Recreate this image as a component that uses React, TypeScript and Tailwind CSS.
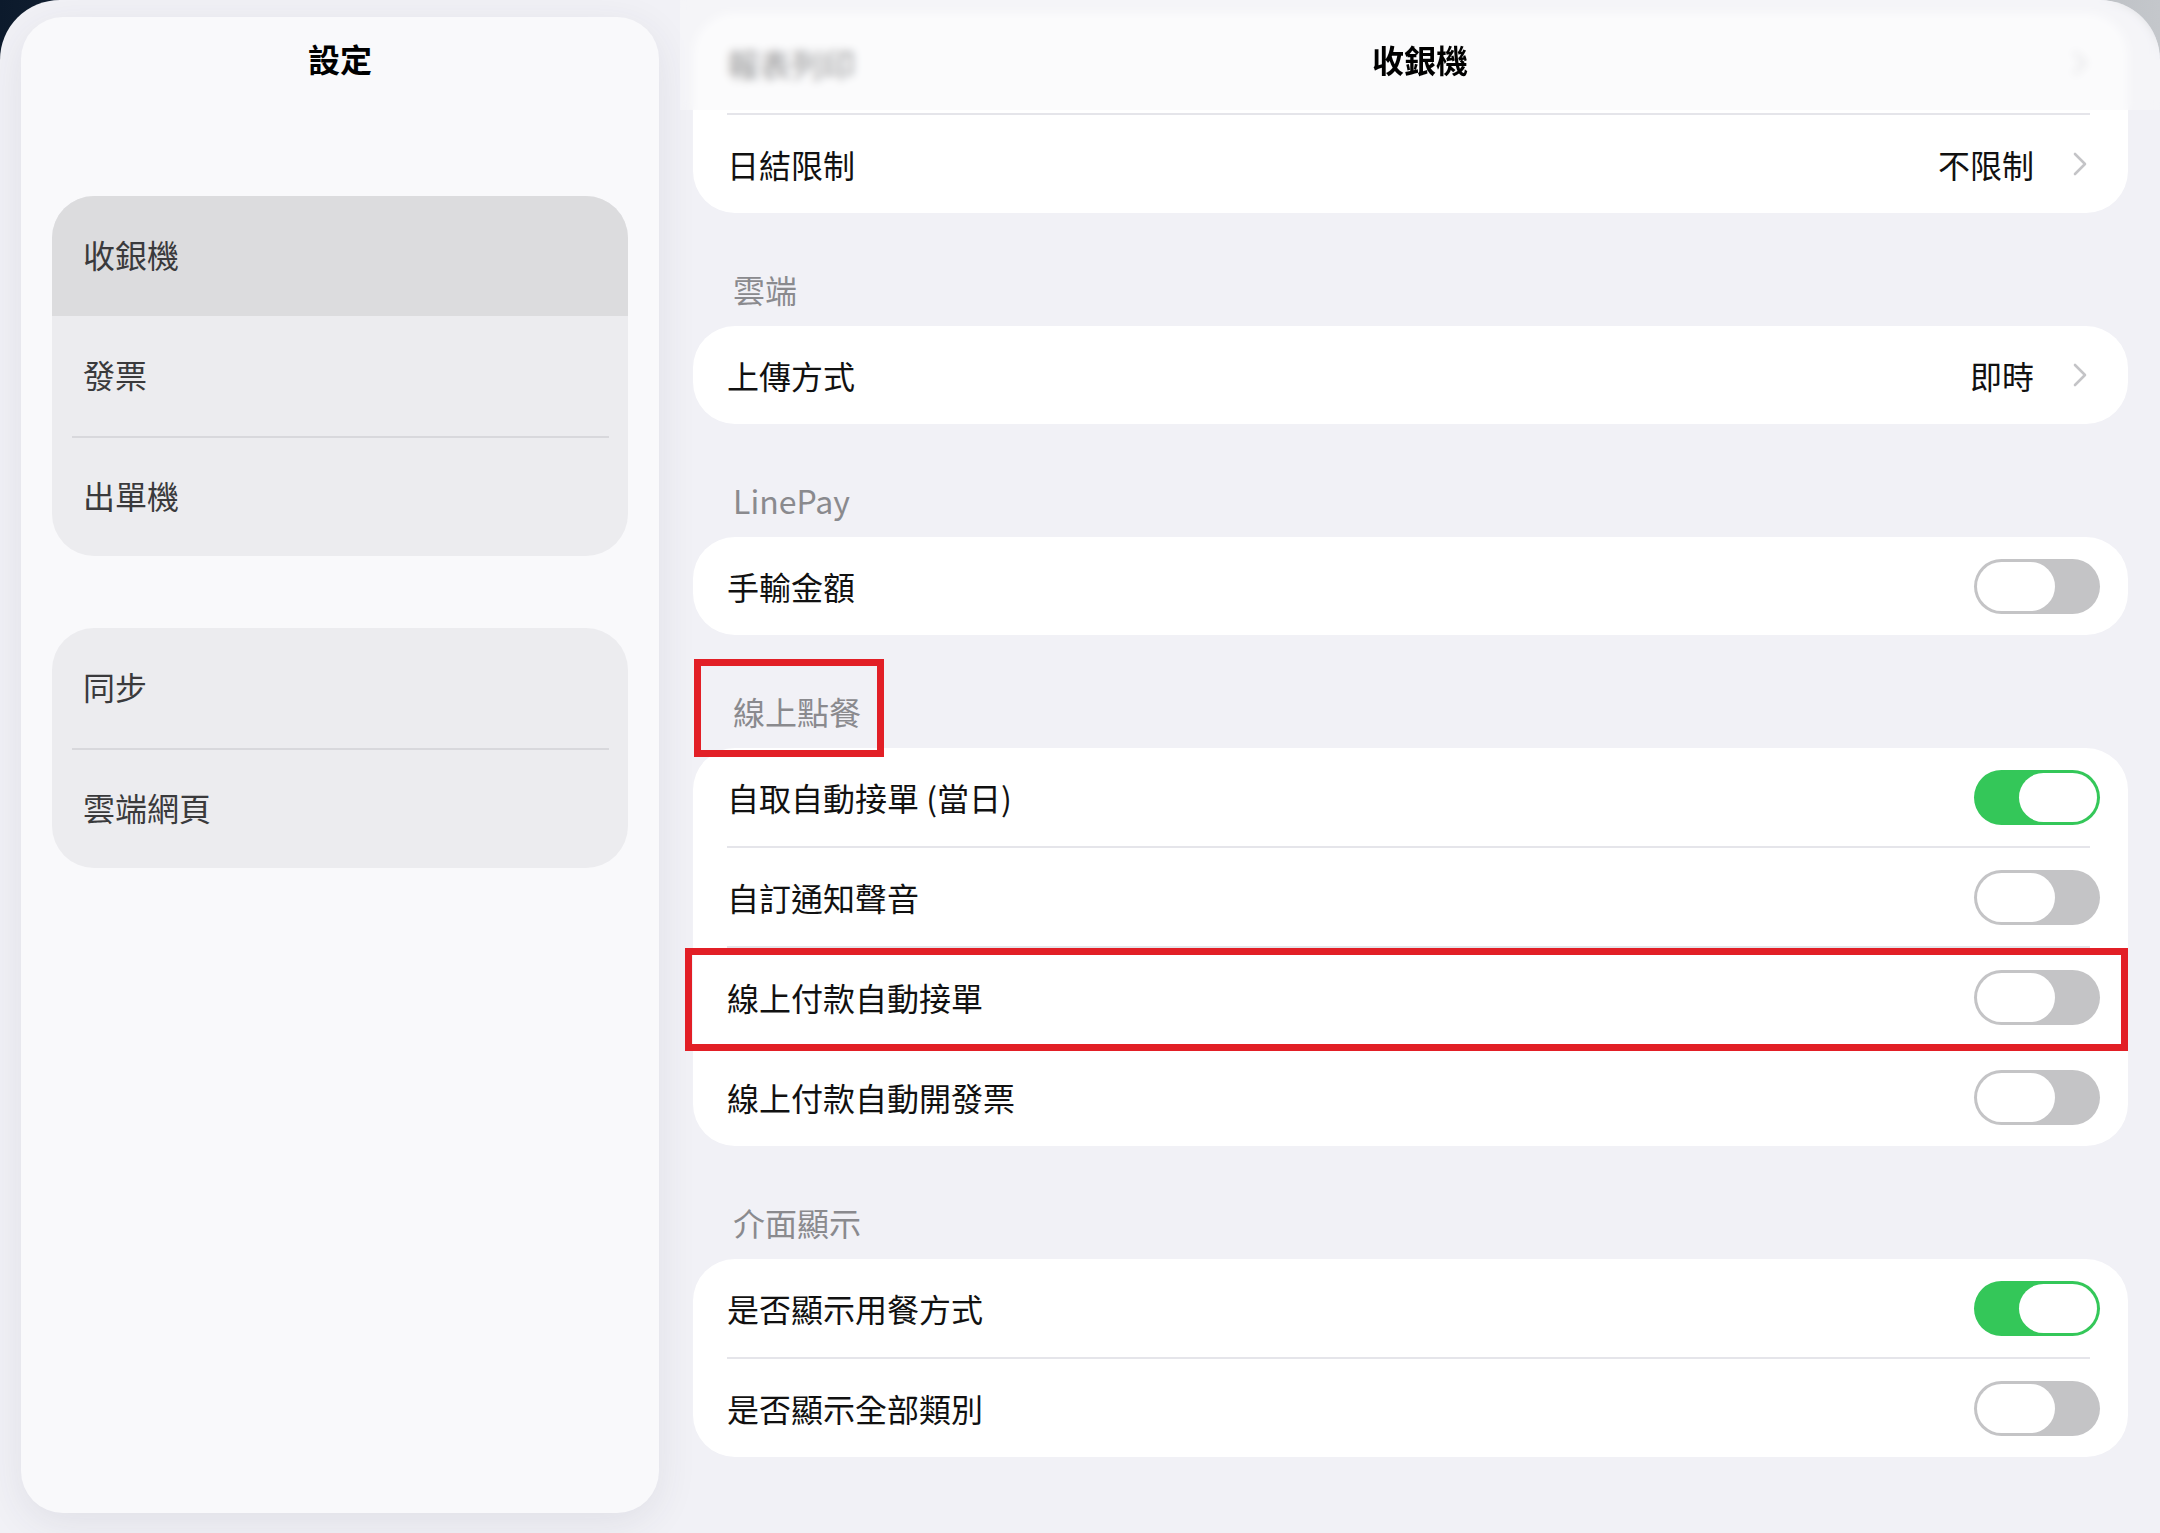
import React from 'react';
import clsx from 'clsx';

type Row = {
  label: string;
  value?: string;
  toggle?: boolean;
  flagged?: boolean;
};

type Section = {
  title?: string;
  flagged?: boolean;
  rows: Row[];
};

const font = { fontFamily: '"Noto Sans CJK TC", "Noto Sans", sans-serif' };

const sections: Section[] = [
  {
    title: '雲端',
    rows: [{ label: '上傳方式', value: '即時' }],
  },
  {
    title: 'LinePay',
    rows: [{ label: '手輸金額', toggle: false }],
  },
  {
    title: '線上點餐',
    flagged: true,
    rows: [
      { label: '自取自動接單 (當日)', toggle: true },
      { label: '自訂通知聲音', toggle: false },
      { label: '線上付款自動接單', toggle: false, flagged: true },
      { label: '線上付款自動開發票', toggle: false },
    ],
  },
  {
    title: '介面顯示',
    rows: [
      { label: '是否顯示用餐方式', toggle: true },
      { label: '是否顯示全部類別', toggle: false },
    ],
  },
];

const Chevron = () => (
  <svg width="16" height="26" viewBox="0 0 16 26" fill="none" className="ml-[38px] shrink-0">
    <path d="M3 3l10 10L3 23" stroke="#c4c4c7" strokeWidth="2.6" strokeLinecap="round" strokeLinejoin="round" />
  </svg>
);

const Toggle = ({ on }: { on: boolean }) => (
  <div
    className={clsx(
      'flex h-[55px] w-[126px] shrink-0 items-center rounded-full p-[3px]',
      on ? 'justify-end bg-[#34c759]' : 'justify-start bg-[#c4c4c6]'
    )}
  >
    <div className="h-[49px] w-[78px] rounded-full bg-white" />
  </div>
);

const Separator = () => <div className="ml-[34px] mr-[38px] h-[2px] bg-[#e5e5ea]" />;

const SettingRow = ({ row }: { row: Row }) => (
  <div className="relative flex h-[98px] items-center pl-[34px] pr-[28px]">
    <span className="flex-1 text-[32px] text-[#111]">{row.label}</span>
    {row.value !== undefined && (
      <div className="flex items-center pr-[12px]">
        <span className="text-[32px] text-[#111]">{row.value}</span>
        <Chevron />
      </div>
    )}
    {row.toggle !== undefined && <Toggle on={row.toggle} />}
    {row.flagged && (
      <div className="pointer-events-none absolute -bottom-[5px] -left-[8px] right-0 top-0 border-[7px] border-[#e21f26]" />
    )}
  </div>
);

const Card = ({ rows }: { rows: Row[] }) => (
  <div className="rounded-[42px] bg-white">
    {rows.map((row, i) => (
      <React.Fragment key={row.label}>
        {i > 0 && <Separator />}
        <SettingRow row={row} />
      </React.Fragment>
    ))}
  </div>
);

const SectionHeader = ({ title, flagged }: { title: string; flagged?: boolean }) => (
  <div className="relative flex h-[113px] items-end pb-[13px] pl-[40px]">
    <span className="text-[32px] text-[#8a8a8e]">{title}</span>
    {flagged && (
      <div className="pointer-events-none absolute left-[1px] top-[24px] h-[98px] w-[190px] border-[7px] border-[#e21f26]" />
    )}
  </div>
);

const NavGroup = ({ items, active }: { items: string[]; active?: string }) => (
  <div className="overflow-hidden rounded-[42px] bg-[#ececef]">
    {items.map((item, i) => {
      const prev = items[i - 1];
      const showLine = i > 0 && prev !== active && item !== active;
      return (
        <React.Fragment key={item}>
          {showLine && <div className="ml-[20px] mr-[19px] h-[2px] bg-[#d8d8dc]" />}
          <div
            className={clsx(
              'flex items-center pb-[4px] pl-[31px] text-[32px] text-[#3a3a3c]',
              item === active ? 'bg-[#dcdcde]' : '',
              showLine ? 'h-[118px]' : 'h-[120px]'
            )}
          >
            {item}
          </div>
        </React.Fragment>
      );
    })}
  </div>
);

export default function App() {
  return (
    <div
      className="h-[1533px] w-[2160px] overflow-hidden bg-gradient-to-r from-[#0c1a2c] via-[#5c6672] to-[#c4c7cb]"
      style={font}
    >
      <div className="flex h-full overflow-hidden rounded-t-[60px] bg-[#f1f1f6]">
        {/* sidebar */}
        <aside className="w-[680px] shrink-0 pb-[20px] pl-[21px] pr-[21px] pt-[17px]">
          <div className="flex h-full flex-col rounded-[42px] bg-[#f9f9fb] px-[31px] shadow-[0_10px_40px_rgba(60,60,80,0.09)]">
            <div className="flex h-[82px] shrink-0 items-center justify-center text-[32px] font-semibold text-black">
              設定
            </div>
            <div className="mt-[97px] flex flex-col gap-[72px]">
              <NavGroup items={['收銀機', '發票', '出單機']} active="收銀機" />
              <NavGroup items={['同步', '雲端網頁']} />
            </div>
          </div>
        </aside>

        {/* detail pane */}
        <main className="relative flex-1 pl-[13px] pr-[32px] pt-[13px]">
          <div className="rounded-[42px] bg-white">
            <div className="flex h-[100px] items-center pl-[34px] pr-[40px]">
              <span className="flex-1 text-[32px] text-[#111]">報表列印</span>
              <Chevron />
            </div>
            <Separator />
            <SettingRow row={{ label: '日結限制', value: '不限制' }} />
          </div>

          {sections.map((s) => (
            <div key={s.title}>
              <SectionHeader title={s.title ?? ''} flagged={s.flagged} />
              <Card rows={s.rows} />
            </div>
          ))}

          {/* frosted navigation bar */}
          <div className="absolute left-0 right-0 top-0 flex h-[110px] items-center justify-center rounded-tr-[60px] bg-[#f7f7fa]/55 backdrop-blur-[4px]">
            <span className="mt-[8px] text-[32px] font-semibold text-black">收銀機</span>
          </div>
        </main>
      </div>
    </div>
  );
}
